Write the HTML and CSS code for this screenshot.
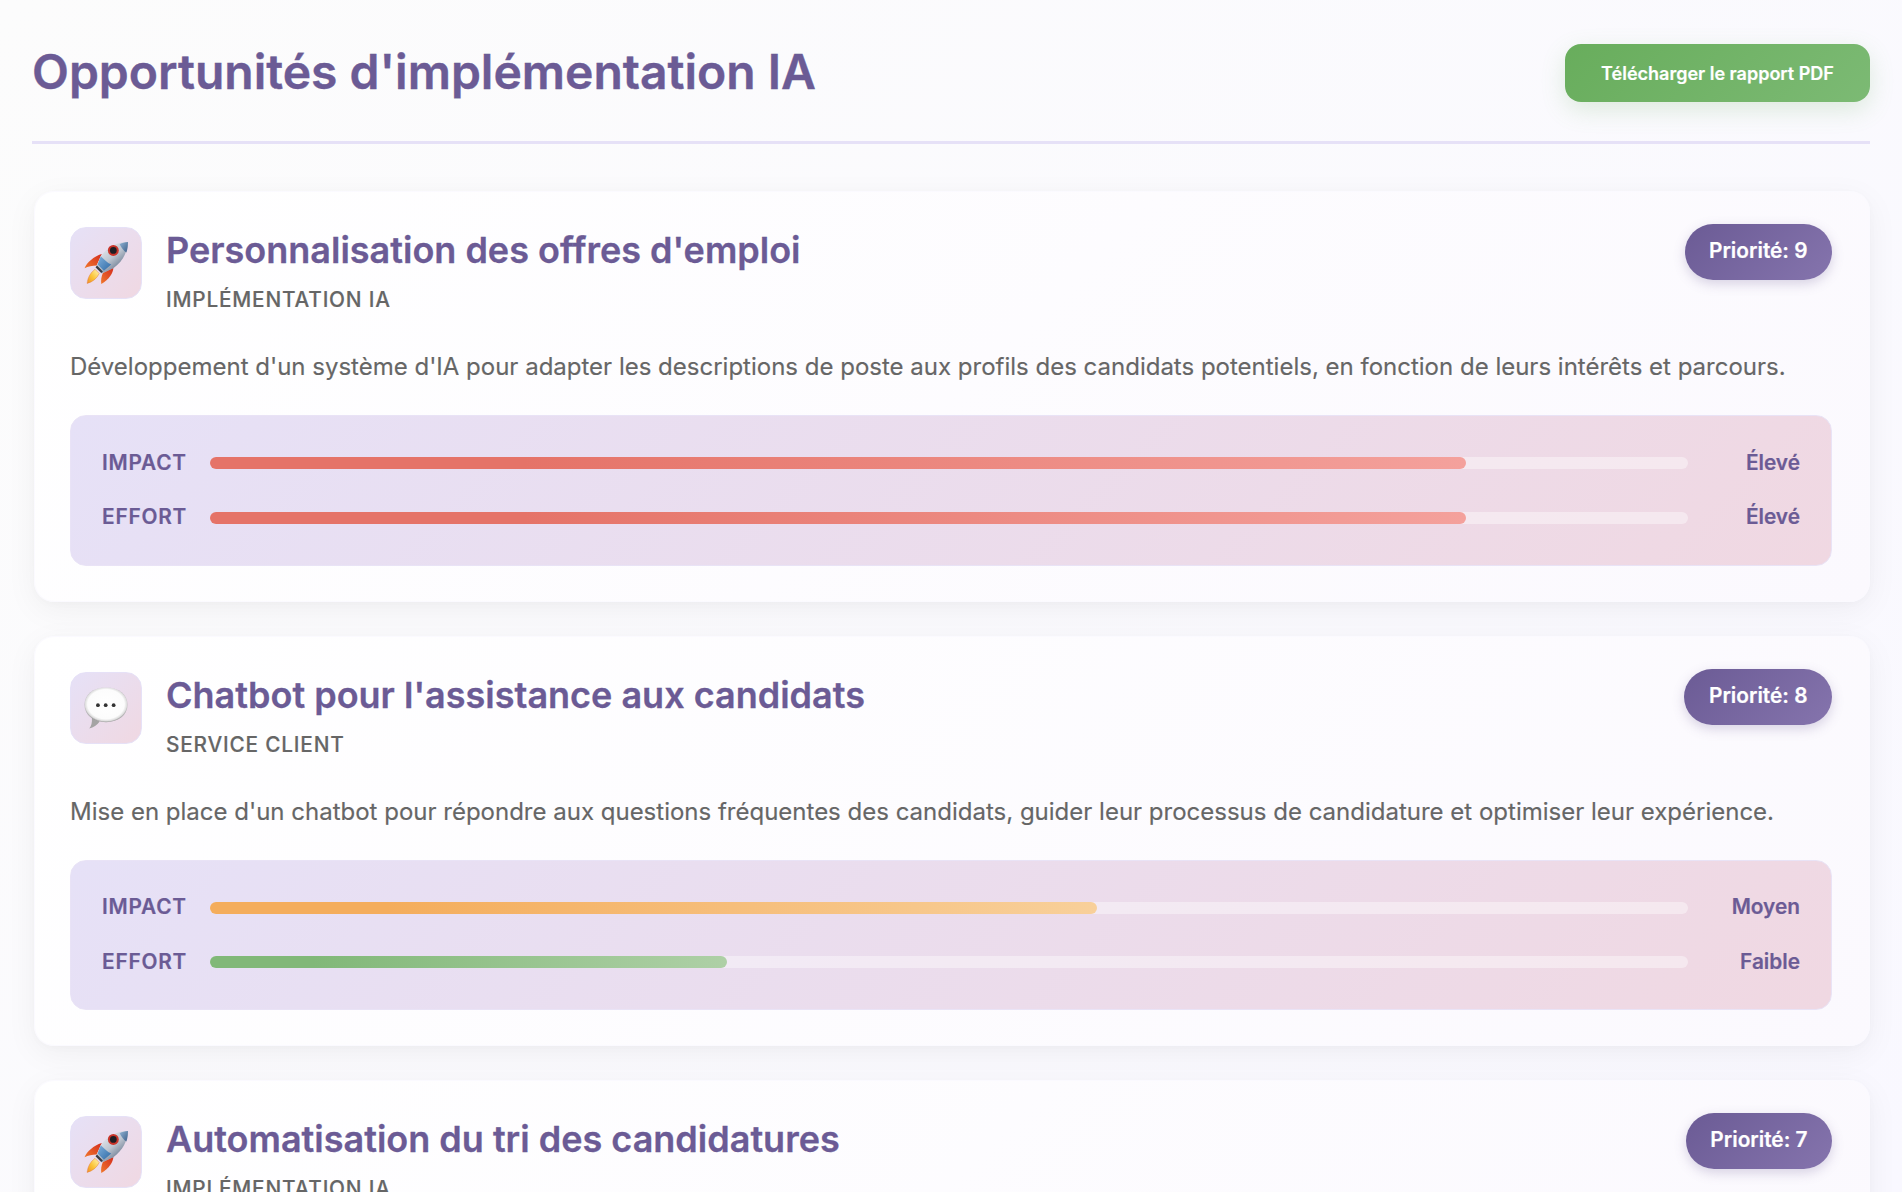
FILE: index.html
```html
<!DOCTYPE html>
<html lang="fr">
<head>
  <meta charset="utf-8" />
  <title>Opportunités d'implémentation IA</title>
  <link rel="stylesheet" href="styles.css">
</head>
<body>
  <svg class="icon-defs" width="0" height="0" aria-hidden="true">
    <defs>
      <linearGradient id="rocketBody" x1="0.15" y1="0.1" x2="0.85" y2="0.9">
        <stop offset="0" stop-color="#eef0f3"/>
        <stop offset="0.5" stop-color="#bcc4cf"/>
        <stop offset="1" stop-color="#52657e"/>
      </linearGradient>
      <linearGradient id="rocketNose" x1="0" y1="0" x2="1" y2="1">
        <stop offset="0" stop-color="#8fb2d4"/>
        <stop offset="1" stop-color="#3d5f88"/>
      </linearGradient>
      <linearGradient id="rocketBlue" x1="0" y1="0" x2="1" y2="1">
        <stop offset="0" stop-color="#7fb0dc"/>
        <stop offset="1" stop-color="#2f6aa5"/>
      </linearGradient>
      <linearGradient id="rocketFlame" x1="1" y1="0" x2="0" y2="1">
        <stop offset="0" stop-color="#fff6b8"/>
        <stop offset="0.55" stop-color="#fbc437"/>
        <stop offset="1" stop-color="#ef8d2a"/>
      </linearGradient>
      <linearGradient id="rocketFin" x1="0" y1="1" x2="1" y2="0">
        <stop offset="0" stop-color="#f0782c"/>
        <stop offset="1" stop-color="#d42d1e"/>
      </linearGradient>
      <radialGradient id="bubbleFill" cx="0.5" cy="0.48" r="0.52">
        <stop offset="0" stop-color="#ffffff"/>
        <stop offset="0.82" stop-color="#fcfcfc"/>
        <stop offset="0.93" stop-color="#dedede"/>
        <stop offset="1" stop-color="#9c9c9c"/>
      </radialGradient>
      <symbol id="rocket" viewBox="0 0 42 41">
        <path d="M0.500 25.500 C3 20 9 14.500 17 12 L12 23 C8 23 4 24 0.500 25.500Z" fill="url(#rocketFin)"/>
        <path d="M16.500 40.500 C16 37 16.500 33.500 18 30 L28 25 C28 30 24 36 16.500 40.500Z" fill="url(#rocketFin)"/>
        <path d="M3 40 C3.500 34.500 6 30 10.500 26.500 L14.500 30.500 C12.500 35 8.500 38.500 3 40Z" fill="url(#rocketFlame)" stroke="#e2702a" stroke-width="0.400"/>
        <path d="M42 0.500 C33 0.500 23 4 16 14 L11.500 25 L17 30.500 L28 25.500 C37 19 41.500 10 42 0.500Z" fill="url(#rocketBody)"/>
        <path d="M42 0.500 C39 0.700 36.500 1.500 34 2.500 C36 6 38 9 40.500 10.500 C41.500 7.500 41.900 4 42 0.500Z" fill="url(#rocketNose)"/>
        <path d="M16 14 C19 17 22 20 26 22 L19 28 L13 22Z" fill="url(#rocketBlue)"/>
        <path d="M11 24.500 L12.500 23 L18 28.500 L16.500 30Z" fill="#3a3d44"/>
        <circle cx="28" cy="8.500" r="5.200" fill="#c9352a"/>
        <circle cx="28" cy="8.500" r="3.200" fill="#1e1f24"/>
      </symbol>
      <symbol id="bubble" viewBox="0 0 42 42">
        <path d="M5 40.500 C7 38 8 35 7.500 30 L15 34 C12.500 37.500 9 40 5 40.500Z" fill="#a4a4a4"/>
        <path d="M21 1.500 C33 1.500 41.500 8 41.500 18 C41.500 28 33 34.500 21 34.500 C9 34.500 0.500 28 0.500 18 C0.500 8 9 1.500 21 1.500Z" fill="url(#bubbleFill)"/>
        <circle cx="13.300" cy="18.300" r="1.800" fill="#333"/>
        <circle cx="20.700" cy="18.300" r="1.800" fill="#333"/>
        <circle cx="28.300" cy="18.300" r="1.800" fill="#333"/>
      </symbol>
    </defs>
  </svg>

  <header class="page-header">
    <h1>Opportunités d'implémentation IA</h1>
    <button type="button" class="download-btn">Télécharger le rapport PDF</button>
  </header>

  <section class="card">
    <div class="card-head">
      <div class="card-icon"><svg class="emoji"><use href="#rocket"/></svg></div>
      <div class="card-heading">
        <h2>Personnalisation des offres d'emploi</h2>
        <div class="category">Implémentation IA</div>
      </div>
      <span class="priority">Priorité: 9</span>
    </div>
    <p class="description">Développement d'un système d'IA pour adapter les descriptions de poste aux profils des candidats potentiels, en fonction de leurs intérêts et parcours.</p>
    <div class="metrics">
      <div class="metric">
        <span class="metric-label">Impact</span>
        <div class="track"><div class="fill high" style="width: 85%"></div></div>
        <span class="metric-value">Élevé</span>
      </div>
      <div class="metric">
        <span class="metric-label">Effort</span>
        <div class="track"><div class="fill high" style="width: 85%"></div></div>
        <span class="metric-value">Élevé</span>
      </div>
    </div>
  </section>

  <section class="card">
    <div class="card-head">
      <div class="card-icon"><svg class="emoji"><use href="#bubble"/></svg></div>
      <div class="card-heading">
        <h2>Chatbot pour l'assistance aux candidats</h2>
        <div class="category">Service client</div>
      </div>
      <span class="priority">Priorité: 8</span>
    </div>
    <p class="description">Mise en place d'un chatbot pour répondre aux questions fréquentes des candidats, guider leur processus de candidature et optimiser leur expérience.</p>
    <div class="metrics">
      <div class="metric">
        <span class="metric-label">Impact</span>
        <div class="track"><div class="fill medium" style="width: 60%"></div></div>
        <span class="metric-value">Moyen</span>
      </div>
      <div class="metric">
        <span class="metric-label">Effort</span>
        <div class="track"><div class="fill low" style="width: 35%"></div></div>
        <span class="metric-value">Faible</span>
      </div>
    </div>
  </section>

  <section class="card">
    <div class="card-head">
      <div class="card-icon"><svg class="emoji"><use href="#rocket"/></svg></div>
      <div class="card-heading">
        <h2>Automatisation du tri des candidatures</h2>
        <div class="category">Implémentation IA</div>
      </div>
      <span class="priority">Priorité: 7</span>
    </div>
  </section>
</body>
</html>
```

FILE: styles.css
```css
html {
  height: 100%;
  overflow: hidden;
}

body {
  font-family: Inter, "Noto Sans", sans-serif;
  margin: 0;
  padding: 36px 32px 0;
  height: 100%;
  box-sizing: border-box;
  overflow: hidden;
  background: linear-gradient(135deg, #fcfcfc 0%, #f9f8ff 100%);
}

.icon-defs {
  position: absolute;
}

.page-header {
  display: flex;
  justify-content: space-between;
  align-items: center;
  padding-bottom: 33px;
  margin-bottom: 47px;
  border-bottom: 3px solid #e6e1f7;
}

h1 {
  margin: 0;
  font-size: 48px;
  line-height: 72px;
  font-weight: 600;
  color: #6b5b95;
  -webkit-text-stroke: 0.4px #6b5b95;
}

.download-btn {
  width: 305px;
  height: 58px;
  margin-top: 2px;
  padding: 0;
  border: none;
  border-radius: 16px;
  font-family: inherit;
  font-size: 18px;
  font-weight: 600;
  color: #fff;
  background: linear-gradient(135deg, #68ad5c 0%, #7cba74 100%);
  box-shadow: 0 8px 24px rgba(104, 173, 92, 0.2);
  cursor: pointer;
  -webkit-text-stroke: 0.2px #fff;
}

.card {
  margin: 0 0 34px 2px;
  padding: 32px 37px 35px 35px;
  border: 1px solid #fbfaff;
  border-radius: 20px;
  background: linear-gradient(135deg, #ffffff 0%, #fbf9fe 100%);
  box-shadow: 0 2px 8px rgba(0, 0, 0, 0.02), 0 8px 32px rgba(0, 0, 0, 0.05);
}

.card-head {
  display: flex;
  align-items: flex-start;
  margin-bottom: 34px;
}

.card-icon {
  flex: none;
  display: flex;
  justify-content: center;
  align-items: center;
  box-sizing: border-box;
  width: 72px;
  height: 72px;
  margin: 3px 24px 0 0;
  border: 1px solid #e6e1f7;
  border-radius: 16px;
  background: linear-gradient(135deg, #e6e1f7 0%, #f0d8e2 100%);
}

.emoji {
  flex: none;
  width: 44px;
  height: 44px;
}

.card-heading {
  flex: 1;
}

h2 {
  margin: 0 0 10px;
  font-size: 36px;
  line-height: 52px;
  font-weight: 600;
  color: #6b5b95;
  -webkit-text-stroke: 0.3px #6b5b95;
}

.category {
  font-size: 20.8px;
  line-height: 28px;
  font-weight: 500;
  letter-spacing: 0.8px;
  text-transform: uppercase;
  color: #666;
  -webkit-text-stroke: 0.15px #666;
}

.priority {
  flex: none;
  padding: 0 24.5px;
  height: 56px;
  line-height: 54px;
  border-radius: 28px;
  font-size: 20.8px;
  font-weight: 600;
  color: #fff;
  background: linear-gradient(135deg, #6b5b95 0%, #8574ad 100%);
  box-shadow: 0 4px 12px rgba(107, 91, 149, 0.25);
  -webkit-text-stroke: 0.2px #fff;
}

.description {
  margin: 0 0 29px;
  font-size: 24px;
  line-height: 38px;
  color: #666;
  -webkit-text-stroke: 0.15px #666;
}

.metrics {
  display: flex;
  flex-direction: column;
  gap: 22.5px;
  padding: 31px;
  border: 1px solid #e9e3f6;
  border-radius: 16px;
  background: linear-gradient(135deg, #e6e1f7 0%, #f0d8e2 100%);
}

.metric {
  display: flex;
  align-items: center;
  height: 32px;
}

.metric-label {
  width: 84px;
  margin: 0 24px 2px 0;
  font-size: 20.8px;
  font-weight: 600;
  letter-spacing: 0.8px;
  text-transform: uppercase;
  white-space: nowrap;
  color: #6b5b95;
  -webkit-text-stroke: 0.2px #6b5b95;
}

.track {
  flex: 1;
  height: 12px;
  border-radius: 6px;
  background: rgba(255, 255, 255, 0.4);
}

.fill {
  height: 100%;
  border-radius: 6px;
}

.fill.high {
  background: linear-gradient(90deg, #e57368 25%, #f4a19c 100%);
}

.fill.medium {
  background: linear-gradient(90deg, #f4ad5c 20%, #f8d09a 100%);
}

.fill.low {
  background: linear-gradient(90deg, #81b878 20%, #aed0a6 100%);
}

.metric-value {
  width: 88px;
  margin: 0 0 2px 24px;
  font-size: 20.8px;
  font-weight: 600;
  text-align: right;
  color: #6b5b95;
  -webkit-text-stroke: 0.2px #6b5b95;
}
```
